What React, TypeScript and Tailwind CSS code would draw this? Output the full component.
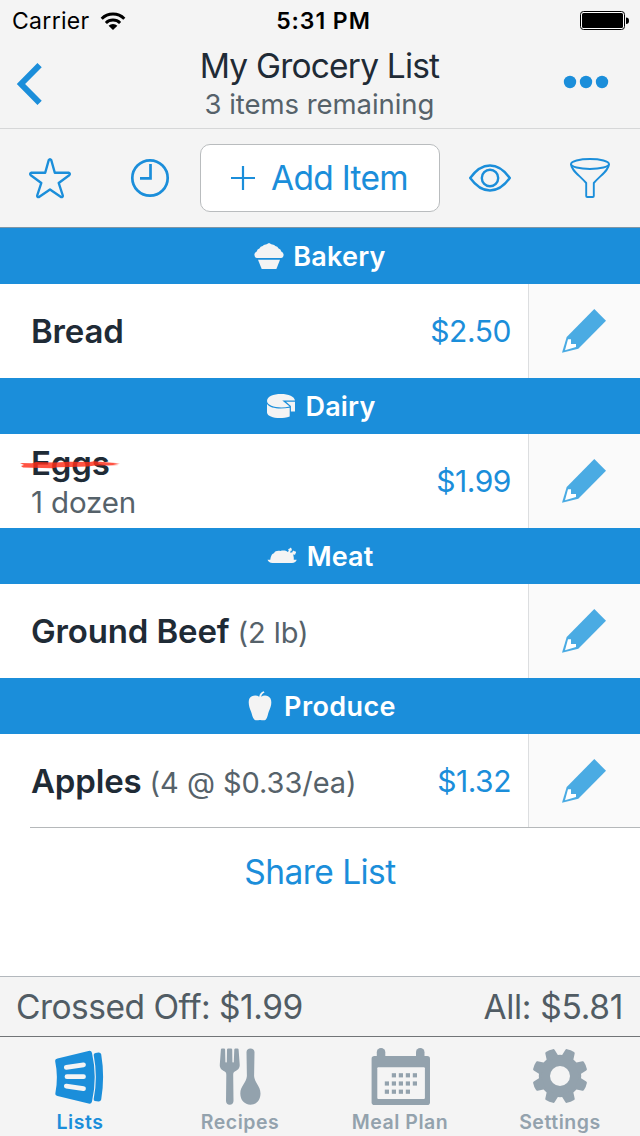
import type { ReactNode } from 'react'

type Item = {
  name: string
  note?: string
  quantity?: string
  price?: string
  crossedOff?: boolean
}

type Section = {
  id: string
  label: string
  className: string
  labelClass: string
  icon: ReactNode
  items: Item[]
}

/* Category icons */

function CupcakeIcon() {
  return (
    <svg width="30" height="28" viewBox="0 0 30 28" fill="#f4f4f4">
      <path d="M3 16 Q.3 15.500 .4 12.500 Q.6 10.300 2.700 9.400 Q3.200 7 5.400 6.400 Q6.400 4.200 8.700 4 Q9.700 2.200 12 2.400 L15 1 L18 2.400 Q20.300 2.200 21.300 4 Q23.600 4.200 24.600 6.400 Q26.800 7 27.300 9.400 Q29.400 10.300 29.600 12.500 Q29.700 15.500 27 16 Z" />
      <path d="M4 17.700 H26 L22.400 27 H7.700 Z" />
    </svg>
  )
}

function CheeseIcon() {
  return (
    <svg width="30" height="28" viewBox="0 0 30 28" fill="#f4f4f4">
      <path d="M29 8.600 H16.300 L23.700 14.400 C14 16.800 1.200 14.700 1 9 C1 4.500 7.300 2 15 2 C22.500 2 28.600 4.500 29 8.600 Z" />
      <path d="M1 12 C4 16.300 13 17.500 23.700 15.700 V24.500 C14.500 27.500 1.400 26 1 20.500 Z" />
      <path d="M20 9.700 H29 V19.500 H24.900 V14 Z" />
    </svg>
  )
}

function TurkeyIcon() {
  return (
    <svg width="30" height="20" viewBox="0 0 30 20" fill="#f4f4f4">
      <path d="M.5 13.800 H3.300 C3.700 10.500 4.800 7.500 7 7.200 C8 4.800 11 4.300 13.500 5 C16 4.200 19 4.600 20.700 6 L22 4.800 C20.600 3.600 21.300 2.300 22.500 2.700 C22.900 1.300 24.700 1.600 24.500 3 C25.500 3.900 24.500 5.100 23.600 4.800 L23.200 6.800 L25.500 6.300 C25.200 4.900 26.700 4.300 27.300 5.300 C28.800 4.700 29.700 6.300 28.500 7.200 C28.800 8.600 27.300 9.200 26.600 8.300 C25.800 9 27.200 11 26.800 13.800 H29.700 C29.300 15.800 27.500 17 25 17 H5.500 C2.800 17 1.200 15.800 .5 13.800 Z" />
    </svg>
  )
}

function AppleIcon() {
  return (
    <svg width="24" height="32" viewBox="0 0 24 32" fill="#f4f4f4">
      <path d="M11.200 6.800 C11.600 4 13.300 1.700 15.700 1.200 L16.500 2.500 C14.500 3.300 13.600 4.800 13.200 6.700 C16 4.600 20.500 5.200 22.500 8.500 C24.500 12.800 22.400 18 20.800 21.500 C19.700 24.500 19.600 28 17.700 29.700 C15.500 31 14 29.800 12 29.900 C10 29.800 8.500 31 6.500 29.700 C4.300 28 4.200 24.500 3 21.500 C1.200 17.500 -.1 12.500 1.300 8.700 C3.300 5.300 8.400 4.700 11.200 6.800 Z" />
    </svg>
  )
}

const SECTIONS: Section[] = [
  {
    id: 'bakery',
    label: 'Bakery',
    className: '',
    labelClass: 'ml-[9px] tracking-[0.200px]',
    icon: <CupcakeIcon />,
    items: [{ name: 'Bread', price: '$2.50' }],
  },
  {
    id: 'dairy',
    label: 'Dairy',
    className: 'pl-[2px]',
    labelClass: 'ml-[9px] tracking-[0.200px]',
    icon: <CheeseIcon />,
    items: [{ name: 'Eggs', note: '1 dozen', price: '$1.99', crossedOff: true }],
  },
  {
    id: 'meat',
    label: 'Meat',
    className: '',
    labelClass: 'ml-[10px] tracking-[0.100px]',
    icon: <TurkeyIcon />,
    items: [{ name: 'Ground Beef', quantity: '(2 lb)' }],
  },
  {
    id: 'produce',
    label: 'Produce',
    className: 'pl-[4px]',
    labelClass: 'ml-[12px] tracking-[0.400px]',
    icon: <AppleIcon />,
    items: [{ name: 'Apples', quantity: '(4 @ $0.33/ea)', price: '$1.32' }],
  },
]

/* Header */

function StatusBar() {
  return (
    <div className="grid h-[42px] grid-cols-3 items-center pr-[11px] pl-[12px] text-[23px] leading-[42px] text-black">
      <div className="flex items-center gap-[10px]">
        <span className="tracking-[0.300px]">Carrier</span>
        <svg width="26" height="20" viewBox="0 0 26 20" fill="none" stroke="#000" strokeWidth="3">
          <path d="M1.700 7.700 A16 16 0 0 1 24.300 7.700" />
          <path d="M5.900 12 A10.200 10.200 0 0 1 20.100 12" />
          <path d="M13 19 L8.600 14.700 A6.300 6.300 0 0 1 17.400 14.700 Z" fill="#000" stroke="none" />
        </svg>
      </div>
      <span className="pl-[6px] text-center font-semibold tracking-[0.950px]">5:31 PM</span>
      <svg className="justify-self-end" width="49" height="20" viewBox="0 0 49 20">
        <rect x=".5" y=".5" width="44" height="18" rx="3" fill="#fff" stroke="#000" />
        <rect x="2" y="2" width="41" height="15" rx="1.500" />
        <path d="M46 6.500 Q49 6.500 49 9.700 Q49 13 46 13 Z" />
      </svg>
    </div>
  )
}

function NavBar() {
  return (
    <div className="flex h-[86px] items-start justify-between pr-[31px] pl-[16px]">
      <button type="button" aria-label="Back" className="mt-[20px] w-[60px]">
        <svg width="28" height="44" viewBox="0 0 28 44" fill="none" stroke="#1b8eda" strokeWidth="6">
          <path d="M23.600 3.200 L5 22 L23.600 40.800" />
        </svg>
      </button>
      <div className="flex flex-col items-center whitespace-nowrap pt-[5px]">
        <h1 className="text-[33.500px] leading-[38px] tracking-[-0.800px] text-[#1f2b36]">
          My Grocery List
        </h1>
        <p className="text-[27.500px] leading-[38px] tracking-[-0.050px] text-[#56626a]">
          3 items remaining
        </p>
      </div>
      <button type="button" aria-label="More" className="mt-[33px]">
        <svg width="46" height="14" viewBox="0 0 46 14" fill="#1b8eda">
          <circle cx="7" cy="7" r="6.200" />
          <circle cx="23" cy="7" r="6.200" />
          <circle cx="39" cy="7" r="6.200" />
        </svg>
      </button>
    </div>
  )
}

function Toolbar() {
  return (
    <div className="grid h-[99px] grid-cols-[100px_100px_240px_100px_100px] items-center justify-items-center border-b border-[#7f96a6] text-[#1b8eda]">
      <svg width="44" height="44" viewBox="0 0 44 44" fill="none" stroke="currentColor" strokeWidth="2.400" strokeLinejoin="round">
        <path d="M23.300 4.200 L26.800 16.700 L40.500 16.700 Q42.800 17.500 41.200 19.300 L30.700 27 L34.800 39.500 Q34.900 41.500 33 41 L22 33.400 L11 41 Q9.100 41.500 9.200 39.500 L13.300 27 L2.800 19.300 Q1.200 17.500 3.500 16.700 L17.200 16.700 L20.700 4.200 Q22 2.200 23.300 4.200 Z" />
      </svg>
      <svg width="40" height="40" viewBox="0 0 40 40" fill="none" stroke="currentColor" strokeWidth="2.700">
        <circle cx="20" cy="20" r="17.700" />
        <path d="M20.500 6 V20.400 H10" />
      </svg>
      <button
        type="button"
        className="flex h-[68px] w-[240px] items-center rounded-[10px] border border-[#b9bcbe] bg-white pl-[30px]"
      >
        <svg width="24" height="24" viewBox="0 0 24 24" stroke="currentColor" strokeWidth="2.200">
          <path d="M12 0 V24 M0 12 H24" />
        </svg>
        <span className="ml-[16px] text-[33.500px] leading-[40px] tracking-[-0.700px]">Add Item</span>
      </button>
      <svg width="44" height="30" viewBox="0 0 44 30" fill="none" stroke="currentColor" strokeWidth="2.400">
        <path d="M2.200 15 C9 5.500 15.500 2.500 22 2.500 C28.500 2.500 35 5.500 41.800 15 C35 24.500 28.500 27.500 22 27.500 C15.500 27.500 9 24.500 2.200 15 Z" strokeLinejoin="round" />
        <circle cx="22" cy="15" r="8.200" />
      </svg>
      <svg width="42" height="42" viewBox="0 0 42 42" fill="none" stroke="currentColor" strokeWidth="1.900">
        <ellipse cx="21" cy="7" rx="19" ry="5" />
        <path d="M2 7 C2 13 10 18 17.200 26 V39 Q17.200 40 18.200 40 H23.800 Q24.800 40 24.800 39 V26 C32 18 40 13 40 7" />
      </svg>
    </div>
  )
}

/* List */

function PencilIcon() {
  return (
    <svg width="48" height="48" viewBox="0 0 48 48">
      <path d="M34.300 2 L46 13.700 L18.300 41.700 L2 45.700 L6.700 30 Z" fill="#4aabe3" />
      <path d="M8 32.300 H11 V37 H16 V40 L5 43.300 Z" fill="#fff" />
    </svg>
  )
}

function BrushStrike() {
  return (
    <svg
      className="absolute top-[16px] left-[-11px]"
      width="100"
      height="12"
      viewBox="0 0 100 12"
      fill="#ff2d1a"
      fillOpacity=".82"
    >
      <path d="M0 4 L12 4.300 L16 3 L34 3.600 L50 2.800 L70 3 L74 2.300 L92 3.700 L100 4.200 L93 5 L99 6 L88 6.600 L75 6.400 L68 7.600 L50 8 L38 8.300 L32 9.300 L3 8.400 L1 7 L4 6 Z" />
    </svg>
  )
}

function ItemRow({ item }: { item: Item }) {
  return (
    <div className="flex h-[94px] bg-white">
      <div className="flex flex-1 items-center justify-between pr-[17px] pl-[31px]">
        <div className={`whitespace-nowrap ${item.note ? 'pt-[2px]' : ''}`}>
          <div className="relative flex items-baseline leading-[40px]">
            <span className="text-[33px] font-semibold tracking-[-0.150px] text-[#1f2b36]">{item.name}</span>
            {item.quantity && (
              <span className="ml-[8px] text-[29px] leading-[30px] tracking-[-0.050px] text-[#56626a]">
                {item.quantity}
              </span>
            )}
            {item.crossedOff && <BrushStrike />}
          </div>
          {item.note && (
            <div className="text-[29.500px] leading-[39px] tracking-[-0.150px] text-[#56626a]">{item.note}</div>
          )}
        </div>
        {item.price && (
          <span className="text-[30px] leading-[40px] tracking-[-0.450px] text-[#1b8eda]">{item.price}</span>
        )}
      </div>
      <button
        type="button"
        aria-label={`Edit ${item.name}`}
        className="flex w-[112px] items-center justify-center border-l border-[#dcdee0] bg-[#fafafa] pr-[2px]"
      >
        <PencilIcon />
      </button>
    </div>
  )
}

function SectionHeader({ section }: { section: Section }) {
  return (
    <div className={`flex h-[56px] items-center justify-center bg-[#1b8eda] text-white ${section.className}`}>
      {section.icon}
      <span className={`pt-[2px] text-[27px] leading-[40px] font-semibold ${section.labelClass}`}>
        {section.label}
      </span>
    </div>
  )
}

/* Bottom tabs */

function ListsIcon() {
  return (
    <svg width="52" height="60" viewBox="0 0 52 60" fill="#1b8eda">
      <path d="M3.500 11.500 L34.500 4 Q37.300 3.300 38 6 Q43.500 30.500 38 54.500 Q37.300 57.300 34.500 56.600 L3.500 49 Q.9 48.300 1.400 46 Q4.500 30 1.200 14.500 Q.8 12.100 3.500 11.500 Z" />
      <path d="M41.500 6 L44.500 5.500 Q46.700 5.400 47.200 7.200 Q51 30 47.200 52.500 Q46.600 54.500 44.500 54.400 L40.800 53.900 Q39.400 53.400 39.700 52 Q44 30.500 39.700 8 Q39.500 6.400 41.500 6 Z" />
      <g stroke="#f4f4f4" strokeWidth="4.800" strokeLinecap="round">
        <path d="M12.300 20.300 L29.500 17.900 M13 29.700 H29.500 M12.300 39.200 L29.500 41.600" />
      </g>
    </svg>
  )
}

function RecipesIcon() {
  return (
    <svg width="42" height="60" viewBox="-.5 0 42 60" fill="#93a2ad">
      <path d="M1.400 2.500 Q1.500 1.400 2.500 1.400 H4.500 Q5.600 1.400 5.600 2.500 L5.900 15 Q6.600 16.200 7.300 15 L7.500 2.500 Q7.600 1.400 8.700 1.400 H11.500 Q12.600 1.400 12.700 2.500 L12.900 15 Q13.600 16.200 14.300 15 L14.800 2.500 Q14.900 1.400 16 1.400 H17.900 Q19 1.400 19.100 2.500 L20.200 17.500 C20.500 21 18.500 22.800 15.700 24.200 C13.900 25.200 13.700 26 13.700 28 L14 54 Q13.800 57.700 10.200 57.700 Q6.700 57.700 6.500 54 L6.800 28 C6.800 26 6.600 25.200 4.800 24.200 C2 22.800 0 21 .3 17.500 Z" />
      <path d="M27 5 Q27.300 1.400 30.900 1.400 Q34.700 1.400 35 5 L34.600 29 C35 35.500 41 39 41 46.500 C41 53 37 57.700 31 57.700 C25 57.700 20.800 53 20.800 46.500 C20.800 39 27 35.500 27.400 29 Z" />
    </svg>
  )
}

const CALENDAR_DOTS = [
  [22, 29, 36, 43],
  [15, 22, 29, 36, 43],
  [15, 22, 29, 36],
]

function CalendarIcon() {
  return (
    <svg width="60" height="60" viewBox="-1 0 60 60" fill="#93a2ad">
      <rect x="5.800" y="1" width="8.500" height="16" rx="4.200" />
      <rect x="45" y="1" width="8.500" height="16" rx="4.200" />
      <rect x=".6" y="9" width="58.400" height="49" rx="2.800" />
      <rect x="6.300" y="20.300" width="47.600" height="31.700" rx="1" fill="#f4f4f4" />
      {CALENDAR_DOTS.map((row, r) =>
        row.map((x) => <rect key={`${r}-${x}`} x={x - 1.2} y={26.2 + r * 8.2} width="4.200" height="4.200" />),
      )}
    </svg>
  )
}

function GearIcon() {
  return (
    <svg width="56" height="60" viewBox="0 0 56 60">
      <g transform="translate(28 29)" fill="#93a2ad">
        <circle r="21.200" />
        {[22.5, 67.5, 112.5, 157.5, 202.5, 247.5, 292.5, 337.5].map((a) => (
          <path
            key={a}
            transform={`rotate(${a})`}
            d="M-6.500 -18 L-5 -26.300 Q-4.800 -27.400 -3.800 -27.500 Q0 -28.300 3.800 -27.500 Q4.800 -27.400 5 -26.300 L6.500 -18 Z"
          />
        ))}
        <circle r="10" fill="#f4f4f4" />
      </g>
    </svg>
  )
}

const TABS = [
  { id: 'lists', label: 'Lists', icon: <ListsIcon />, active: true },
  { id: 'recipes', label: 'Recipes', icon: <RecipesIcon />, active: false },
  { id: 'meal-plan', label: 'Meal Plan', icon: <CalendarIcon />, active: false },
  { id: 'settings', label: 'Settings', icon: <GearIcon />, active: false },
]

function TabBar() {
  return (
    <nav className="grid h-[100px] grid-cols-4 border-t border-[#717477]">
      {TABS.map((t) => (
        <button
          key={t.id}
          type="button"
          className={`flex flex-col items-center pt-[10px] ${t.active ? 'text-[#1b8eda]' : 'text-[#93a2ad]'}`}
        >
          {t.icon}
          <span className="mt-[3px] text-[19.500px] leading-[24px] font-semibold tracking-[0.550px]">
            {t.label}
          </span>
        </button>
      ))}
    </nav>
  )
}

export default function App() {
  return (
    <div className="flex h-[1136px] w-[640px] flex-col overflow-hidden bg-white font-['Inter',sans-serif]">
      <header className="bg-[#f4f4f4]">
        <StatusBar />
        <NavBar />
        <div className="border-t border-[#d6d7d8]">
          <Toolbar />
        </div>
      </header>

      <main className="flex-1">
        {SECTIONS.map((section) => (
          <section key={section.id}>
            <SectionHeader section={section} />
            {section.items.map((item) => (
              <ItemRow key={item.name} item={item} />
            ))}
          </section>
        ))}
        <div className="relative -mt-px ml-[30px] h-px bg-[#b5b8ba]" />
        <button
          type="button"
          className="mt-[24px] block w-full text-center text-[33.500px] leading-[40px] tracking-[-0.550px] text-[#1b8eda]"
        >
          Share List
        </button>
      </main>

      <footer className="bg-[#f4f4f4]">
        <div className="flex h-[60px] items-center justify-between border-t border-[#b3b8bd] pr-[17px] pl-[16px] text-[33.500px] leading-[40px] text-[#515c64]">
          <span className="tracking-[-0.500px]">Crossed Off: $1.99</span>
          <span className="tracking-[-0.300px]">All: $5.81</span>
        </div>
        <TabBar />
      </footer>
    </div>
  )
}
